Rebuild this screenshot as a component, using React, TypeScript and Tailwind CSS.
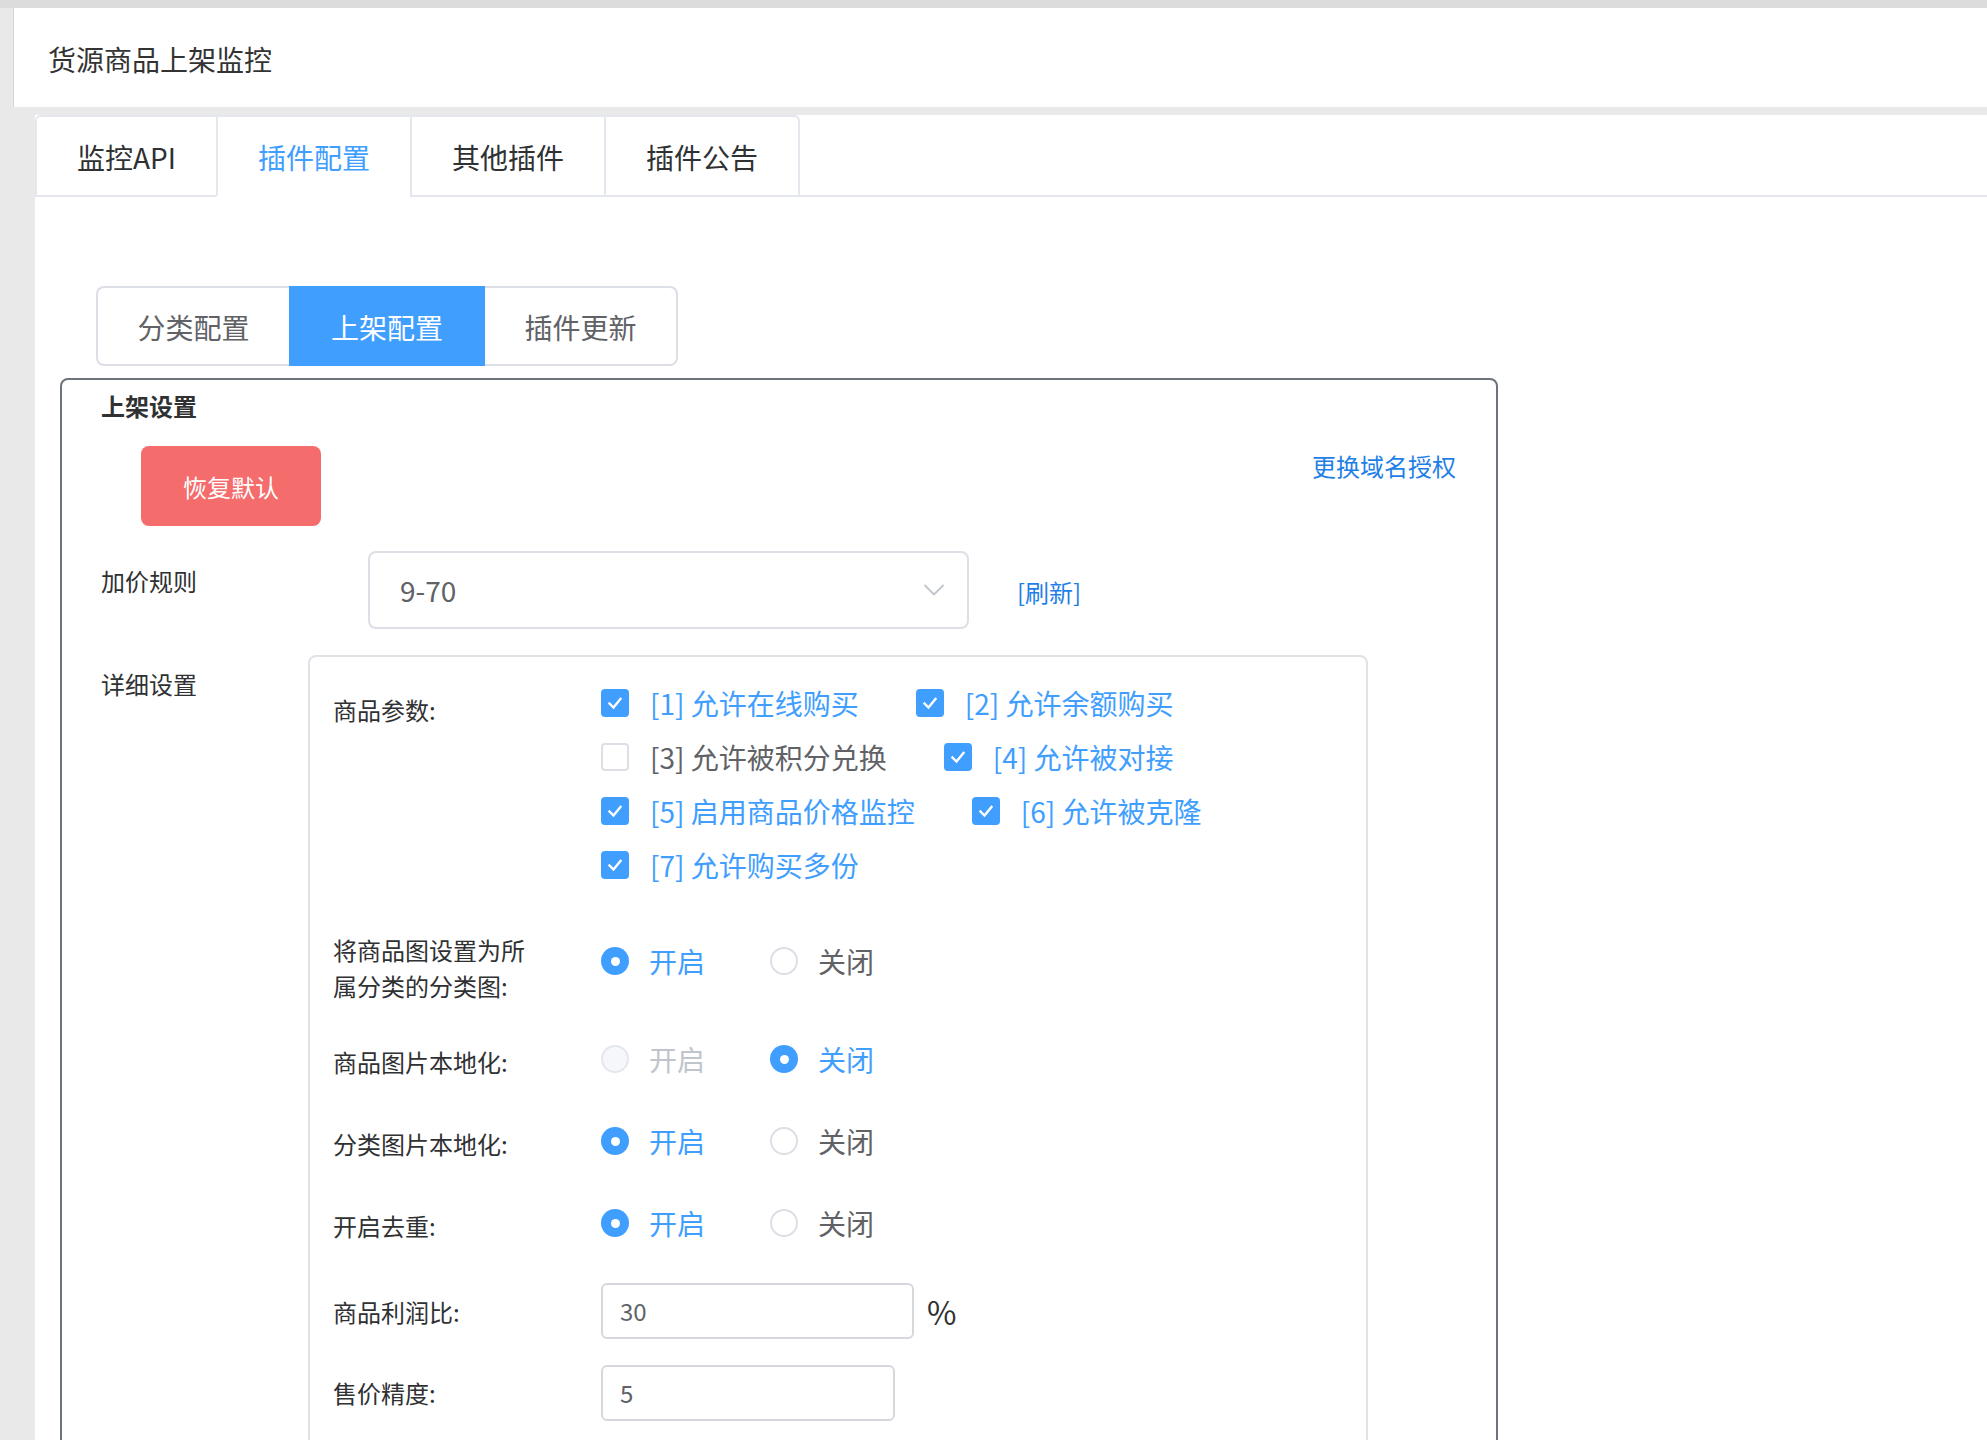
import React from 'react'

const tabs = ['监控API', '插件配置', '其他插件', '插件公告']
const segments = ['分类配置', '上架配置', '插件更新']

const params = [
  { label: '[1] 允许在线购买', checked: true },
  { label: '[2] 允许余额购买', checked: true },
  { label: '[3] 允许被积分兑换', checked: false },
  { label: '[4] 允许被对接', checked: true },
  { label: '[5] 启用商品价格监控', checked: true },
  { label: '[6] 允许被克隆', checked: true },
  { label: '[7] 允许购买多份', checked: true },
]

type RadioState = 'on' | 'off' | 'disabled'

function Checkbox({ checked }: { checked: boolean }) {
  if (!checked) {
    return <span className="w-[28px] h-[28px] rounded-[4px] border-2 border-[#dcdfe6] bg-white shrink-0" />
  }
  return (
    <span className="w-[28px] h-[28px] rounded-[4px] bg-[#409eff] flex items-center justify-center shrink-0">
      <svg width="28" height="28" viewBox="0 0 28 28">
        <path d="M8.5 14.5 L12.5 18.5 L19.5 10" fill="none" stroke="#fff" strokeWidth="2.4" strokeLinecap="square" />
      </svg>
    </span>
  )
}

function Radio({ state, label }: { state: RadioState; label: string }) {
  const circle =
    state === 'on' ? (
      <span className="w-[28px] h-[28px] rounded-full bg-[#409eff] flex items-center justify-center shrink-0">
        <span className="w-[9px] h-[9px] rounded-full bg-white" />
      </span>
    ) : state === 'disabled' ? (
      <span className="w-[28px] h-[28px] rounded-full border-2 border-[#e4e7ed] bg-[#f5f7fa] shrink-0" />
    ) : (
      <span className="w-[28px] h-[28px] rounded-full border-2 border-[#dcdfe6] bg-white shrink-0" />
    )
  const color = state === 'on' ? 'text-[#409eff]' : state === 'disabled' ? 'text-[#c0c4cc]' : 'text-[#606266]'
  return (
    <div className="flex items-center gap-[20px] mr-[65px]">
      {circle}
      <span className={`text-[28px] leading-[36px] ${color}`}>{label}</span>
    </div>
  )
}

function RadioRow({ label, states, two }: { label: React.ReactNode; states: [RadioState, RadioState]; two?: boolean }) {
  return (
    <div className="flex items-start">
      <div className={`w-[268px] shrink-0 text-[24px] leading-[36px] text-[#303133] ${two ? '' : 'mt-[14px]'}`}>{label}</div>
      <div className="h-[58px] flex items-center">
        <Radio state={states[0]} label="开启" />
        <Radio state={states[1]} label="关闭" />
      </div>
    </div>
  )
}

export default function App() {
  return (
    <div className="h-[1440px] overflow-hidden bg-[#e9e9e9] font-['Noto_Sans_CJK_SC','Noto_Sans',sans-serif]">
      <div className="h-[8px] bg-[#dcdcdc]" />
      <div className="pl-[13px]">
        <div className="h-[99px] bg-white border-l border-[#d6d6d6] flex items-center pl-[34px] pt-[2px] text-[28px] text-[#333]">
          货源商品上架监控
        </div>
        <div className="pt-[8px] pl-[22px]">
          <div className="bg-white h-[1400px]">
            {/* top tabs */}
            <div className="flex border-b-2 border-[#e4e7ed]">
              <div className="flex border-2 border-b-0 border-[#e4e7ed] rounded-t-[6px] -mb-[2px]">
                {tabs.map((t, i) => (
                  <div
                    key={t}
                    className={`h-[80px] px-[40px] flex items-center pt-[2px] text-[28px] border-b-2 ${
                      i > 0 ? 'border-l-2 border-l-[#e4e7ed]' : ''
                    } ${i === 1 ? 'border-b-white text-[#409eff]' : 'border-b-[#e4e7ed] text-[#303133]'}`}
                  >
                    {t}
                  </div>
                ))}
              </div>
            </div>

            <div className="pl-[25px]">
              {/* segment buttons */}
              <div className="ml-[36px] mt-[89px] flex w-fit">
                {segments.map((s, i) => (
                  <div
                    key={s}
                    className={`h-[80px] flex items-center justify-center pt-[2px] text-[28px] ${
                      i === 1
                        ? 'w-[196px] bg-[#409eff] text-white'
                        : `w-[193px] border-2 border-[#dcdfe6] text-[#606266] ${
                            i === 0 ? 'rounded-l-[8px] border-r-0' : 'rounded-r-[8px] border-l-0'
                          }`
                    }`}
                  >
                    {s}
                  </div>
                ))}
              </div>

              {/* main box */}
              <div className="mt-[12px] w-[1438px] h-[1200px] border-2 border-[#6c737a] rounded-[8px] pt-[10px] pl-[39px] pr-[40px]">
                <div className="text-[24px] leading-[32px] font-bold text-[#303133]">上架设置</div>

                <div className="mt-[24px] flex justify-between items-start">
                  <button className="ml-[40px] w-[180px] h-[80px] rounded-[8px] bg-[#f46c6c] text-white text-[24px] pt-[2px]">
                    恢复默认
                  </button>
                  <span className="mt-[4px] text-[24px] leading-[32px] text-[#1f7fe8]">更换域名授权</span>
                </div>

                <div className="mt-[25px] flex items-start">
                  <div className="w-[267px] shrink-0 mt-[14px] text-[24px] leading-[32px] text-[#303133]">加价规则</div>
                  <div className="w-[601px] h-[78px] border-2 border-[#dcdfe6] rounded-[8px] flex items-center justify-between pl-[30px] pr-[22px]">
                    <span className="text-[28px] text-[#606266]">9-70</span>
                    <svg width="22" height="14" viewBox="0 0 22 14">
                      <path d="M1.5 2 L11 11.5 L20.5 2" fill="none" stroke="#c0c4cc" strokeWidth="1.8" />
                    </svg>
                  </div>
                  <div className="h-[78px] flex items-center ml-[48px] pt-[4px] text-[24px] text-[#1f7fe8]">[刷新]</div>
                </div>

                <div className="mt-[26px] flex items-start">
                  <div className="w-[207px] shrink-0 mt-[13px] text-[24px] leading-[32px] text-[#303133]">详细设置</div>
                  <div className="w-[1060px] h-[900px] border-2 border-[#dfe3e8] rounded-[8px] pt-[19px] pl-[23px] pr-[40px]">
                    {/* goods params */}
                    <div className="flex items-start">
                      <div className="w-[268px] shrink-0 mt-[7px] text-[24px] leading-[54px] text-[#303133]">商品参数:</div>
                      <div className="flex-1 flex flex-wrap">
                        {params.map((p) => (
                          <div key={p.label} className="h-[54px] flex items-center gap-[21px] mr-[57px]">
                            <Checkbox checked={p.checked} />
                            <span className={`text-[28px] ${p.checked ? 'text-[#409eff]' : 'text-[#606266]'}`}>{p.label}</span>
                          </div>
                        ))}
                      </div>
                    </div>

                    <div className="mt-[40px] flex flex-col">
                      <div className="mb-[26px]">
                        <RadioRow
                          two
                          label={
                            <>
                              将商品图设置为所
                              <br />
                              属分类的分类图:
                            </>
                          }
                          states={['on', 'off']}
                        />
                      </div>
                      <div className="mb-[24px]">
                        <RadioRow label="商品图片本地化:" states={['disabled', 'on']} />
                      </div>
                      <div className="mb-[24px]">
                        <RadioRow label="分类图片本地化:" states={['on', 'off']} />
                      </div>
                      <RadioRow label="开启去重:" states={['on', 'off']} />
                    </div>

                    <div className="mt-[31px] flex items-start">
                      <div className="w-[268px] shrink-0 mt-[13px] text-[24px] leading-[32px] text-[#303133]">商品利润比:</div>
                      <div className="w-[313px] h-[56px] border-2 border-[#d5d8dd] rounded-[6px] flex items-center pl-[17px] text-[24px] text-[#606266]">
                        30
                      </div>
                      <span className="h-[56px] flex items-center ml-[13px] text-[32px] text-[#303133]">%</span>
                    </div>

                    <div className="mt-[26px] flex items-start">
                      <div className="w-[268px] shrink-0 mt-[12px] text-[24px] leading-[32px] text-[#303133]">售价精度:</div>
                      <div className="w-[294px] h-[56px] border-2 border-[#d5d8dd] rounded-[6px] flex items-center pl-[17px] text-[24px] text-[#606266]">
                        5
                      </div>
                    </div>
                  </div>
                </div>
              </div>
            </div>
          </div>
        </div>
      </div>
    </div>
  )
}
